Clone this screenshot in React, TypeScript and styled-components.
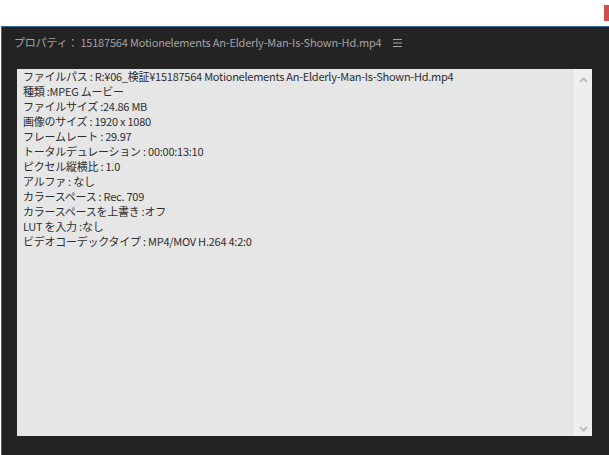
import React from "react";
import styled, { createGlobalStyle } from "styled-components";

const Global = createGlobalStyle`
  html, body { margin: 0; padding: 0; background: #ffffff; }
  body { width: 609px; height: 455px; overflow: hidden; }
  #root { width: 609px; height: 455px; }
`;

const Screen = styled.div`
  width: 609px;
  height: 455px;
  display: flex;
  flex-direction: column;
  font-family: "Noto Sans CJK JP", "Noto Sans", sans-serif;
`;

const TopStrip = styled.div`
  height: 26px;
  flex: none;
  display: flex;
  justify-content: flex-end;
  align-items: flex-start;
  background: #ffffff;
`;

const RedTab = styled.div`
  width: 5px;
  height: 16px;
  margin-top: 5px;
  background: #c9504f;
`;

const Panel = styled.div`
  flex: 1;
  margin-left: 1px;
  border-top: 1px solid #3b6894;
  border-left: 1px solid #3b6894;
  background: #232323;
  display: flex;
  flex-direction: column;
  min-height: 0;
`;

const Header = styled.div`
  height: 42px;
  flex: none;
  display: flex;
  align-items: flex-start;
  padding: 6px 0 0 12px;
  box-sizing: border-box;
  color: #a4a4a4;
  font-size: 11px;
  letter-spacing: -0.2px;
  line-height: 18px;
  gap: 12px;
`;

const Menu = styled.svg`
  margin-top: 6px;
  flex: none;
`;

const InfoBox = styled.div`
  flex: 1;
  margin: 0 17px 19px 15px;
  background: #e6e6e6;
  display: grid;
  grid-template-columns: 1fr 18px;
  min-height: 0;
`;

const Lines = styled.div`
  padding: 0 0 0 6px;
  color: #2e2e2e;
  font-size: 11px;
  letter-spacing: -0.25px;
  line-height: 15px;
  white-space: nowrap;
  overflow: hidden;
`;

const Line = styled.div`
  height: 15px;
`;

const Scrollbar = styled.div`
  border-left: 1px solid #f7f7f7;
  background: #eeeeee;
  display: flex;
  flex-direction: column;
  justify-content: space-between;
  align-items: center;
  padding: 8px 0 4px;
`;

const Chevron = ({ down }: { down?: boolean }) => (
  <svg width="9" height="6" viewBox="0 0 9 6">
    <path
      d={down ? "M1 1 L4.5 4.5 L8 1" : "M1 5 L4.5 1.5 L8 5"}
      stroke="#bdbdbd"
      strokeWidth="2"
      fill="none"
    />
  </svg>
);

const rows = [
  "ファイルパス : R:¥06_検証¥15187564 Motionelements An-Elderly-Man-Is-Shown-Hd.mp4",
  "種類 :MPEG ムービー",
  "ファイルサイズ :24.86 MB",
  "画像のサイズ : 1920 x 1080",
  "フレームレート : 29.97",
  "トータルデュレーション : 00:00:13:10",
  "ピクセル縦横比 : 1.0",
  "アルファ : なし",
  "カラースペース : Rec. 709",
  "カラースペースを上書き :オフ",
  "LUT を入力 :なし",
  "ビデオコーデックタイプ : MP4/MOV H.264 4:2:0",
];

export default function App() {
  return (
    <Screen>
      <Global />
      <TopStrip>
        <RedTab />
      </TopStrip>
      <Panel>
        <Header>
          <span>プロパティ： 15187564 Motionelements An-Elderly-Man-Is-Shown-Hd.mp4</span>
          <Menu width="9" height="8" viewBox="0 0 9 8">
            <path d="M0 0.5 H9 M0 4 H9 M0 7.5 H9" stroke="#a4a4a4" strokeWidth="1" />
          </Menu>
        </Header>
        <InfoBox>
          <Lines>
            {rows.map((r) => (
              <Line key={r}>{r}</Line>
            ))}
          </Lines>
          <Scrollbar>
            <Chevron />
            <Chevron down />
          </Scrollbar>
        </InfoBox>
      </Panel>
    </Screen>
  );
}
